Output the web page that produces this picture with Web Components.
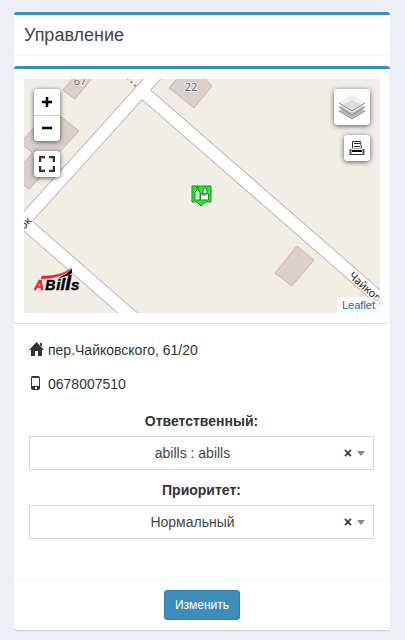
<!DOCTYPE html>
<html lang="ru">
<head>
<meta charset="utf-8">
<meta name="viewport" content="width=device-width, initial-scale=1">
<title>Управление</title>
<style>
  body {
    margin: 0;
    padding: 12px 15px 10px 14px;
    background: #ecf0f5;
    color: #333;
    font: 14px/20px "Liberation Sans", Arial, sans-serif;
  }
</style>
</head>
<body>
<control-box>
  <h3 slot="title">Управление</h3>
  <map-box>
    <street-map></street-map>
  </map-box>
  <control-form>
    <info-line icon="home">пер.Чайковского, 61/20</info-line>
    <info-line icon="phone">0678007510</info-line>
    <select-field label="Ответственный:" options="abills : abills"></select-field>
    <select-field label="Приоритет:" options="Нормальный|Низкий|Высокий"></select-field>
  </control-form>
  <submit-button slot="footer">Изменить</submit-button>
</control-box>

<script>
class ControlBox extends HTMLElement {
  connectedCallback() {
    const shadow = this.attachShadow({ mode: "open" });
    shadow.innerHTML = `
      <style>
        :host {
          display: block;
          background: #fff;
          border-top: 3px solid #3c8dbc;
          border-radius: 3px;
          box-shadow: 0 1px 1px rgba(0, 0, 0, 0.15);
        }
        header {
          padding: 10px;
          border-bottom: 1px solid #f4f4f4;
          margin-bottom: 10px;
        }
        ::slotted(h3) {
          margin: 0;
          font-size: 18px;
          font-weight: normal;
          line-height: 20px;
          color: #444;
        }
        footer {
          display: flex;
          justify-content: center;
          padding: 10px;
          border-top: 1px solid #f4f4f4;
        }
      </style>
      <header><slot name="title"></slot></header>
      <slot></slot>
      <footer><slot name="footer"></slot></footer>
    `;
  }
}

class MapBox extends HTMLElement {
  connectedCallback() {
    const shadow = this.attachShadow({ mode: "open" });
    shadow.innerHTML = `
      <style>
        :host {
          display: block;
          padding: 10px;
          border-top: 3px solid #3c8dbc;
          border-radius: 3px;
          box-shadow: 0 1px 1px rgba(0, 0, 0, 0.15);
        }
      </style>
      <slot></slot>
    `;
  }
}

class StreetMap extends HTMLElement {
  connectedCallback() {
    const shadow = this.attachShadow({ mode: "open" });
    shadow.innerHTML = `
      <style>
        :host {
          display: block;
          position: relative;
          height: 234px;
          overflow: hidden;
          background: #f1eee8;
        }
        .tiles {
          display: block;
          width: 100%;
          height: 100%;
        }
        .tiles text {
          font-family: "Noto Sans", sans-serif;
          paint-order: stroke;
          stroke: rgba(255, 255, 255, 0.7);
          stroke-width: 2px;
        }
        .controls {
          position: absolute;
          top: 10px;
          display: flex;
          flex-direction: column;
          gap: 10px;
        }
        .left {
          left: 10px;
        }
        .right {
          right: 10px;
          align-items: flex-end;
        }
        .bar {
          border-radius: 4px;
          background: #fff;
          box-shadow: 0 1px 5px rgba(0, 0, 0, 0.65);
          overflow: hidden;
        }
        button {
          display: grid;
          place-items: center;
          width: 26px;
          height: 26px;
          padding: 0;
          border: 0;
          background: #fff;
          color: #000;
          cursor: pointer;
        }
        button + button {
          border-top: 1px solid #ccc;
        }
        .layers {
          width: 36px;
          height: 36px;
        }
        .marker {
          position: absolute;
          left: 167px;
          top: 106px;
        }
        .logo {
          position: absolute;
          left: 10px;
          bottom: 17px;
        }
        .attribution {
          position: absolute;
          right: 0;
          bottom: 0;
          padding: 0 5px;
          background: rgba(255, 255, 255, 0.7);
          font-size: 11px;
          line-height: 16px;
        }
        a {
          color: #0078a8;
          text-decoration: none;
        }
      </style>
      <svg class="tiles" viewBox="0 0 356 234" preserveAspectRatio="xMidYMid slice" aria-hidden="true">
        <rect width="356" height="234" fill="#f1eee8"/>
        <g fill="#d9d0c9" stroke="#c4b5aa">
          <path d="M39 11L51 20L69 -2L50 -2Z"/>
          <path d="M145 9L170 29L188 7L177 -4L156 -4Z"/>
          <path d="M-2 62L27 30L55 52L31 78L13 78L-2 65Z"/>
          <path d="M-2 86L12 70L30 84L5 110L-2 105Z"/>
          <path d="M251 194L273 167L290 181L268 207Z"/>
        </g>
        <path d="M103 -1L119 14" stroke="#b8862c" stroke-width="2" stroke-dasharray="2 3" fill="none"/>
        <g fill="none" stroke="#bbb" stroke-width="14">
          <path d="M137 -10L-20 164"/>
          <path d="M118 12L367 229"/>
          <path d="M-4 140L122 250"/>
        </g>
        <g fill="none" stroke="#fff" stroke-width="12">
          <path d="M137 -10L-20 164"/>
          <path d="M118 12L367 229"/>
          <path d="M-4 140L122 250"/>
        </g>
        <g font-size="11" fill="#666" text-anchor="middle">
          <text x="56" y="6">67</text>
          <text x="167" y="12">22</text>
        </g>
        <g font-size="11" fill="#222">
          <text transform="translate(0 151) rotate(-48)">ок</text>
          <text transform="translate(324 198) rotate(41)">Чайковского</text>
        </g>
      </svg>

      <svg class="marker" width="21" height="23" viewBox="0 0 21 23" aria-hidden="true">
        <path d="M1 1H20V17H14L10 21L6 17H1Z" fill="#22ef2f" stroke="#168a20"/>
        <path d="M4 15V7L6 5V2H7V5L9 7V15Z" fill="#fff" stroke="#23812b"/>
        <path d="M12 9V6L13 3H15L16 6V9Z" fill="#fff" stroke="#23812b"/>
        <path d="M9.500 9H17.500V15H9.500ZM12 9V11M14 9V11" fill="#fff" stroke="#23812b"/>
        <path d="M5 9H9M5 12H9" stroke="#5be066"/>
      </svg>

      <svg class="logo" width="48" height="28" viewBox="0 0 48 28" role="img" aria-label="ABills">
        <path d="M8 8Q25 9 38 0Q29 10 7 11Z" fill="#e8222b" stroke="#e8222b" stroke-width="0.500"/>
        <path d="M26 9Q33 6 38 1V5Q34 8 25 10Z" fill="#000"/>
        <text x="0" y="22" font-family="Liberation Sans, sans-serif" font-size="14" font-weight="bold" font-style="italic" stroke="#000" stroke-width="0.500">
          <tspan fill="#e8222b" stroke="#e8222b">A</tspan><tspan dx="1">B</tspan><tspan dx="1" font-size="15">i</tspan><tspan font-size="17">l</tspan><tspan font-size="21">l</tspan><tspan font-size="15">s</tspan>
        </text>
      </svg>

      <div class="controls left">
        <div class="bar">
          <button type="button" aria-label="Zoom in">
            <svg width="12" height="12"><path d="M6 1V11M1 6H11" stroke="#000" stroke-width="2.500"/></svg>
          </button>
          <button type="button" aria-label="Zoom out">
            <svg width="12" height="12"><path d="M1 5H11" stroke="#000" stroke-width="2.500"/></svg>
          </button>
        </div>
        <div class="bar">
          <button type="button" aria-label="Full screen">
            <svg width="16" height="16" fill="none" stroke="#333" stroke-width="2.500">
              <path d="M1 6V1H6M10 1H15V6M15 10V15H10M6 15H1V10"/>
            </svg>
          </button>
        </div>
      </div>

      <div class="controls right">
        <div class="bar">
          <button class="layers" type="button" aria-label="Layers">
            <svg width="26" height="26" viewBox="0 0 26 26">
              <path d="M0 17L13 9L26 17L13 25Z" fill="#b9b9b9"/>
              <path d="M0 17L13 25L26 17" fill="none" stroke="#909090"/>
              <path d="M0 13L13 5L26 13L13 21Z" fill="#c6c6c6"/>
              <path d="M0 13L13 21L26 13" fill="none" stroke="#808080"/>
              <path d="M0 9L13 1L26 9L13 17Z" fill="#dcdcdc"/>
              <path d="M0 9L13 1L26 9L22 11L13 6L4 11Z" fill="#f0f0f0"/>
              <path d="M0 10L13 18L26 10" fill="none" stroke="#fff"/>
              <path d="M0 9L13 17L26 9" fill="none" stroke="#808080"/>
            </svg>
          </button>
        </div>
        <div class="bar">
          <button type="button" aria-label="Print">
            <svg width="16" height="16" viewBox="0 0 16 16" fill="none" stroke="#333">
              <path d="M3.500 9V1.500H11.500L12.500 9M5 3.500H11M5 6.500H11"/>
              <path d="M1 14.500H15"/>
              <path d="M1.500 9V15M14.500 9V15" stroke-width="2" stroke="#555"/>
              <path d="M3 11H13" stroke="#000" stroke-width="2"/>
              <path d="M3 8.500H13" stroke="#aaa"/>
            </svg>
          </button>
        </div>
      </div>

      <div class="attribution"><a href="https://leafletjs.com">Leaflet</a></div>
    `;
  }
}

class ControlForm extends HTMLElement {
  connectedCallback() {
    const shadow = this.attachShadow({ mode: "open" });
    shadow.innerHTML = `
      <style>
        :host {
          display: block;
          padding: 17px 16px 40px 15px;
        }
      </style>
      <slot></slot>
    `;
  }
}

const icons = {
  home: `<path d="M7.500 0L15 8H13V14H9V9H6V14H2V8H0L7.500 0ZM11 1H13V5L11 3Z"/>`,
  phone: `<path fill-rule="evenodd" d="M4 0H9Q11 0 11 2V12Q11 14 9 14H4Q2 14 2 12V2Q2 0 4 0ZM3 2V10H10V2ZM6 11V13H8V11Z"/>`,
};

class InfoLine extends HTMLElement {
  connectedCallback() {
    const shadow = this.attachShadow({ mode: "open" });
    shadow.innerHTML = `
      <style>
        :host {
          display: flex;
          align-items: center;
          gap: 4px;
          margin-bottom: 14px;
        }
        svg {
          margin-top: -2px;
          fill: #333;
        }
      </style>
      <svg width="15" height="14" viewBox="0 0 15 14" aria-hidden="true">${icons[this.getAttribute("icon")]}</svg>
      <span><slot></slot></span>
    `;
  }
}

class SelectField extends HTMLElement {
  connectedCallback() {
    const options = this.getAttribute("options").split("|");
    const shadow = this.attachShadow({ mode: "open" });
    shadow.innerHTML = `
      <style>
        :host {
          display: flex;
          flex-direction: column;
          gap: 5px;
          padding-top: 3px;
          margin-bottom: 7px;
        }
        :host(:last-child) {
          margin-bottom: 0;
        }
        label {
          font-weight: bold;
          text-align: center;
        }
        .field {
          position: relative;
        }
        select {
          display: block;
          box-sizing: border-box;
          width: 100%;
          height: 34px;
          padding: 0 28px 0 10px;
          border: 1px solid #d2d6de;
          border-radius: 0;
          background: #fff;
          color: #444;
          font: inherit;
          text-align: center;
          text-align-last: center;
          appearance: none;
        }
        button {
          position: absolute;
          top: 7px;
          right: 22px;
          padding: 0;
          border: 0;
          background: none;
          color: #333;
          font: bold 14px/20px "Liberation Sans", Arial, sans-serif;
          cursor: pointer;
        }
        .arrow {
          position: absolute;
          top: 15px;
          right: 9px;
          border: 4px solid transparent;
          border-top: 5px solid #888;
          border-bottom: 0;
          pointer-events: none;
        }
      </style>
      <label for="value">${this.getAttribute("label")}</label>
      <div class="field">
        <select id="value">${options.map((o) => `<option>${o}</option>`).join("")}</select>
        <button type="button">×</button>
        <span class="arrow"></span>
      </div>
    `;
    shadow.querySelector("button").addEventListener("click", () => {
      shadow.querySelector("select").selectedIndex = -1;
    });
  }
}

class SubmitButton extends HTMLElement {
  connectedCallback() {
    const shadow = this.attachShadow({ mode: "open" });
    shadow.innerHTML = `
      <style>
        :host {
          display: block;
        }
        button {
          display: block;
          padding: 5px 10px;
          border: 1px solid #367fa9;
          border-radius: 3px;
          background: #3c8dbc;
          color: #fff;
          font: 12px/18px "Liberation Sans", Arial, sans-serif;
          cursor: pointer;
        }
      </style>
      <button type="button"><slot></slot></button>
    `;
  }
}

customElements.define("control-box", ControlBox);
customElements.define("map-box", MapBox);
customElements.define("street-map", StreetMap);
customElements.define("control-form", ControlForm);
customElements.define("info-line", InfoLine);
customElements.define("select-field", SelectField);
customElements.define("submit-button", SubmitButton);
</script>
</body>
</html>
